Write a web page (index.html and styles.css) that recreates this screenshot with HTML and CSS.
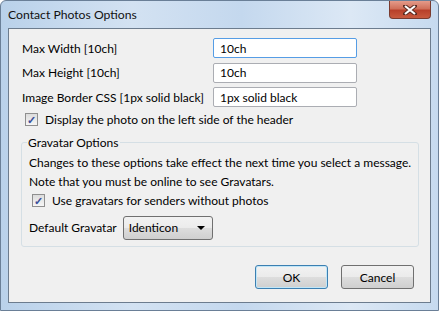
FILE: index.html
```html
<!DOCTYPE html>
<html lang="en">
<head>
    <meta charset="UTF-8">
    <title>Contact Photos Options</title>
    <link rel="stylesheet" href="styles.css">
</head>
<body>
    <div class="window">
        <div class="titlebar">
            <span class="title">Contact Photos Options</span>
            <button class="close" type="button">
                <svg width="14" height="10" viewBox="0 0 14 10">
                    <path d="M2 1 L12 9 M12 1 L2 9" stroke="#5a2a20" stroke-width="4" stroke-linecap="square"/>
                    <path d="M2 1 L12 9 M12 1 L2 9" stroke="#fff" stroke-width="2.2"/>
                </svg>
            </button>
        </div>
        <div class="client">
            <div class="row">
                <label class="label">Max Width [10ch]</label>
                <input class="field focus" type="text" value="10ch">
            </div>
            <div class="row">
                <label class="label">Max Height [10ch]</label>
                <input class="field" type="text" value="10ch">
            </div>
            <div class="row">
                <label class="label">Image Border CSS [1px solid black]</label>
                <input class="field" type="text" value="1px solid black">
            </div>
            <div class="check">
                <span class="box">&#10003;</span>
                <span>Display the photo on the left side of the header</span>
            </div>

            <fieldset class="group">
                <legend>Gravatar Options</legend>
                <p class="note">Changes to these options take effect the next time you select a message.</p>
                <p class="note">Note that you must be online to see Gravatars.</p>
                <div class="check">
                    <span class="box">&#10003;</span>
                    <span>Use gravatars for senders without photos</span>
                </div>
                <div class="select-row">
                    <span>Default Gravatar</span>
                    <div class="select">
                        <span>Identicon</span>
                        <span class="arrow"></span>
                    </div>
                </div>
            </fieldset>

            <div class="buttons">
                <button class="btn default" type="button">OK</button>
                <button class="btn" type="button">Cancel</button>
            </div>
        </div>
    </div>
</body>
</html>
```

FILE: styles.css
```css
body {
    margin: 0;
    padding: 0;
    font-family: Lato, "Noto Sans", sans-serif;
    font-size: 12px;
    color: #000;
    background: #fff;
}

.window {
    width: 439px;
    height: 311px;
    box-sizing: border-box;
    padding: 0 7px 7px 7px;
    display: flex;
    flex-direction: column;
    background: linear-gradient(90deg, #b9d1ea 0%, #d3e2f2 30%, #c4d8ee 55%, #dce8f5 80%, #c6daef 100%);
    border: 1px solid #6a7f97;
    border-radius: 6px 6px 0 0;
}

.titlebar {
    height: 27px;
    display: flex;
    align-items: flex-start;
    justify-content: space-between;
}

.title {
    font-size: 12.2px;
    margin-top: 6px;
    color: #111;
}

.close {
    width: 42px;
    height: 18px;
    margin-right: 0;
    border: 1px solid #7a3b2f;
    border-top: none;
    border-radius: 0 0 4px 4px;
    background: linear-gradient(#e59b8a 0%, #d0705a 45%, #b8402a 55%, #c85a3e 100%);
    display: flex;
    align-items: center;
    justify-content: center;
    padding: 0;
}

.client {
    flex: 1;
    background: #f0f0f0;
    border: 1px solid #6c7c8e;
    padding: 7px 13px 0 13px;
    display: flex;
    flex-direction: column;
}

.row {
    display: flex;
    align-items: center;
    height: 24.5px;
}

.label {
    width: 191px;
}

.field {
    width: 144px;
    height: 20px;
    box-sizing: border-box;
    border: 1px solid #abadb3;
    border-radius: 2px;
    background: #fff;
    font: inherit;
    padding: 0 6px;
}

.field.focus {
    border-color: #569de5;
}

.check {
    display: flex;
    align-items: center;
    gap: 7px;
    margin-top: 2px;
    margin-left: 3px;
}

.box {
    width: 11px;
    height: 11px;
    border: 1px solid #8f8f8f;
    background: linear-gradient(#dcdcdc, #f6f6f6);
    color: #3b4f9a;
    font-size: 11px;
    line-height: 11px;
    text-align: center;
    font-weight: bold;
}

.group {
    margin: 8px -2px 0 -1px;
    padding: 5px 7px 6px 7px;
    border: 1px solid #d5dfe5;
    border-radius: 3px;
}

.group legend {
    padding: 0 2px 0 1px;
    margin-left: -2px;
}

.note {
    margin: 0 0 4px 0;
    line-height: 15px;
    white-space: nowrap;
}

.group .check {
    margin-top: 0;
}

.select-row {
    display: flex;
    align-items: center;
    gap: 6px;
    margin-top: 8px;
}

.select {
    width: 90px;
    height: 24px;
    box-sizing: border-box;
    border: 1px solid #707070;
    border-radius: 3px;
    background: linear-gradient(#f2f2f2 0%, #ebebeb 50%, #dddddd 51%, #cfcfcf 100%);
    display: flex;
    align-items: center;
    justify-content: space-between;
    padding: 0 7px 0 5px;
}

.arrow {
    width: 0;
    height: 0;
    border-left: 4px solid transparent;
    border-right: 4px solid transparent;
    border-top: 4px solid #000;
}

.buttons {
    display: flex;
    justify-content: flex-end;
    gap: 13px;
    margin-top: auto;
    margin-bottom: 13px;
    margin-right: 3px;
}

.btn {
    width: 73px;
    height: 24px;
    font: inherit;
    border: 1px solid #707070;
    border-radius: 3px;
    background: linear-gradient(#f2f2f2 0%, #ebebeb 50%, #dddddd 51%, #cfcfcf 100%);
}

.btn.default {
    border-color: #3c7fb1;
    box-shadow: inset 0 0 0 1px #c0e6f8;
}
```
